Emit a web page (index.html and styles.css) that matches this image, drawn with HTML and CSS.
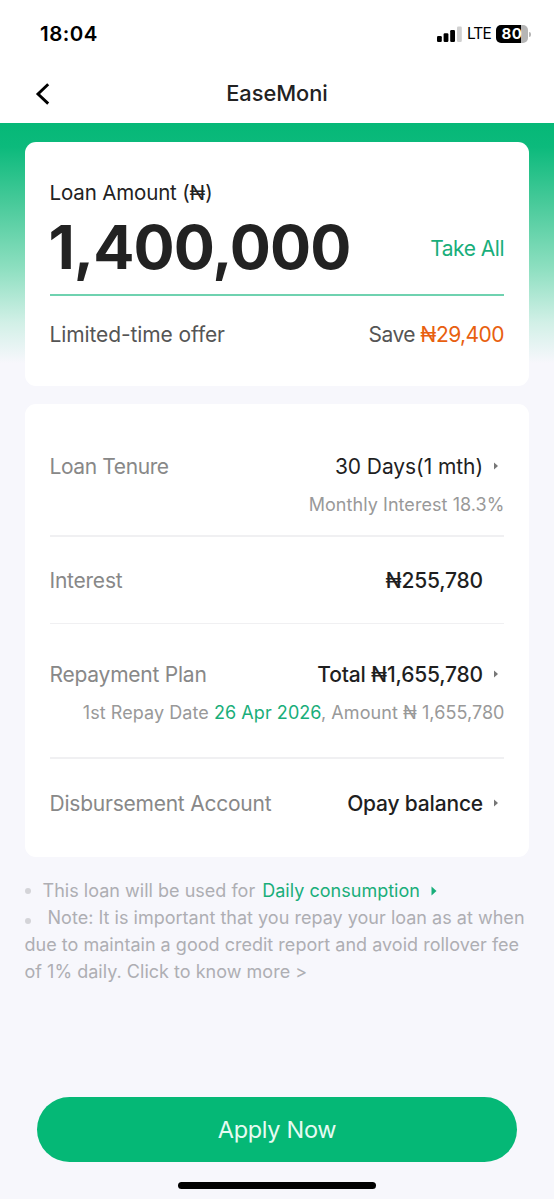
FILE: index.html
```html
<!DOCTYPE html>
<html lang="en">
<head>
<meta charset="utf-8">
<title>EaseMoni</title>
<link rel="stylesheet" href="styles.css">
</head>
<body>
<div class="screen">
  <header class="top">
    <div class="status">
      <span class="time">18:04</span>
      <div class="indicators">
        <svg class="signal" width="25" height="16" viewBox="0 0 25 16">
          <rect x="0" y="10" width="4.8" height="6" rx="1.2"/>
          <rect x="6.6" y="7.2" width="4.8" height="8.8" rx="1.2"/>
          <rect x="13.2" y="4" width="4.8" height="12" rx="1.2"/>
          <rect x="20" y="0.5" width="4.8" height="15.5" rx="1.2" fill="#d0d0d0"/>
        </svg>
        <span class="lte">LTE</span>
        <div class="battery"><span class="level">80</span><i class="cap"></i></div>
      </div>
    </div>
    <nav class="nav">
      <svg class="back" width="16" height="22" viewBox="0 0 16 22"><path d="M13.2 1.2 L3 11 L13.2 20.6" fill="none" stroke="#000" stroke-width="2.9"/></svg>
      <h1 class="title">EaseMoni</h1>
    </nav>
  </header>
  <main class="content">
    <section class="card amount-card">
      <div class="amount-label">Loan Amount (₦)</div>
      <div class="amount-row">
        <span class="amount">1,400,000</span>
        <span class="take">Take All</span>
      </div>
      <div class="offer">
        <span class="offer-name">Limited-time offer</span>
        <span class="save">Save <span class="orange">₦29,400</span></span>
      </div>
    </section>
    <section class="card details">
      <div class="row tall">
        <div class="line"><span class="label tenure">Loan Tenure</span><span class="value days">30 Days(1 mth)</span><svg class="arrow" width="4" height="8" viewBox="0 0 4 8"><path d="M0 0.5 L4 4 L0 7.5Z"/></svg></div>
        <div class="sub monthly">Monthly Interest 18.3%</div>
      </div>
      <div class="row interest">
        <div class="line"><span class="label">Interest</span><span class="value medium">₦255,780</span><span class="arrow"></span></div>
      </div>
      <div class="row plan">
        <div class="line"><span class="label">Repayment Plan</span><span class="value medium">Total ₦1,655,780</span><svg class="arrow" width="4" height="8" viewBox="0 0 4 8"><path d="M0 0.5 L4 4 L0 7.5Z"/></svg></div>
        <div class="sub">1st Repay Date <span class="green">26 Apr 2026</span>, Amount ₦ 1,655,780</div>
      </div>
      <div class="row account">
        <div class="line"><span class="label">Disbursement Account</span><span class="value medium">Opay balance</span><svg class="arrow" width="4" height="8" viewBox="0 0 4 8"><path d="M0 0.5 L4 4 L0 7.5Z"/></svg></div>
      </div>
    </section>
    <section class="notes">
      <div class="note use"><i class="dot"></i><span class="use-text">This loan will be used for</span><span class="green purpose">Daily consumption</span><svg class="use-arrow" width="6" height="10" viewBox="0 0 6 10"><path d="M0.5 0.5 L5.5 5 L0.5 9.5Z"/></svg></div>
      <p class="note"><i class="dot low"></i>Note: It is important that you repay your loan as at when<br>due to maintain a good credit report and avoid rollover fee<br>of 1% daily. Click to know more &gt;</p>
    </section>
  </main>
  <footer class="footer">
    <button class="apply">Apply Now</button>
    <div class="home"></div>
  </footer>
</div>
</body>
</html>
```
FILE: styles.css
```css
* { box-sizing: border-box; }
body { margin: 0; background: #f7f7fc; font-family: Inter, "Liberation Sans", sans-serif; color: #222; }
.screen { width: 554px; height: 1199px; display: flex; flex-direction: column; overflow: hidden; white-space: nowrap; }
.top { height: 123px; background: #fff; flex: none; }
.status { height: 67px; padding: 0 26px 0 40px; display: flex; align-items: center; justify-content: space-between; color: #000; }
.time { font-size: 20.5px; font-weight: 600; letter-spacing: 0.5px; }
.indicators { display: flex; align-items: center; }
.signal { margin-right: 1px; }
.lte { font-size: 15.5px; margin: 0 0 0 4px; width: 23px; letter-spacing: -0.9px; }
.battery { position: relative; width: 32px; height: 18px; margin-left: 6px; border-radius: 5px; background: linear-gradient(90deg, #000 25px, #b5b5b5 25px); }
.level { display: block; text-align: center; font-size: 15px; line-height: 18px; font-weight: 700; color: #fff; letter-spacing: 0.5px; }
.cap { position: absolute; right: -3px; top: 7px; width: 2px; height: 5px; border-radius: 0 2px 2px 0; background: #b5b5b5; }
.nav { height: 54px; display: grid; grid-template-columns: 60px 1fr 60px; align-items: center; }
.back { margin-left: 35px; }
.title { margin: 0 0 2px; font-size: 21.8px; font-weight: 550; text-align: center; }
.content { flex: 1; padding: 19px 25px 0; background: linear-gradient(#06b877 0, #0cba7c 24px, #48ca9a 80px, #8ddfc0 145px, #d2f0e7 200px, #f7f7fc 240px); }
.card { background: #fff; border-radius: 11px; padding: 0 25px 0 24.5px; }
.amount-card { height: 244px; padding-top: 37px; }
.amount-label { font-size: 20.5px; line-height: 28px; letter-spacing: -0.15px; }
.amount-row { height: 89px; display: flex; align-items: center; justify-content: space-between; border-bottom: 2px solid #6fd2b0; padding-bottom: 4px; }
.amount { font-size: 61px; font-weight: 700; letter-spacing: -0.95px; margin: 0 0 3px -1px; }
.take { color: #19ae7a; font-size: 21px; letter-spacing: -0.5px; }
.offer { height: 76px; display: flex; align-items: center; justify-content: space-between; font-size: 21px; color: #555; letter-spacing: -0.1px; }
.save { letter-spacing: -0.55px; }
.orange { color: #e8600f; }
.details { margin-top: 18px; height: 453px; }
.row { border-bottom: 2px solid #f0f0f2; }
.tall { height: 133px; padding-top: 48px; }
.interest { height: 87px; padding-top: 29px; border-bottom-width: 1px; }
.plan { height: 135px; padding-top: 36px; }
.account { border: 0; padding-top: 30px; }
.line { display: flex; align-items: center; height: 28px; font-size: 21px; }
.label { color: #888; margin-right: auto; letter-spacing: -0.23px; }
.tenure { letter-spacing: -0.4px; }
.value { color: #1f1f1f; letter-spacing: -0.18px; }
.days { letter-spacing: -0.07px; }
.medium { font-weight: 500; }
.arrow { width: 4px; margin: 0 6px 0 11px; fill: #777; }
.sub { margin: 13px -0.5px 0 0; line-height: 24px; text-align: right; color: #999; font-size: 18px; letter-spacing: 0.06px; }
.green { color: #19ae7a; }
.notes { margin-top: 20px; color: #aeaeb3; font-size: 18px; line-height: 27px; letter-spacing: 0.02px; }
.note { margin: 0 0 0 -0.5px; }
.use { display: flex; align-items: center; }
.dot { display: inline-block; width: 6px; height: 6px; border-radius: 50%; background: #d4d4d8; margin-right: 12px; }
.low { margin-right: 17px; }
.purpose { margin-left: 7px; }
.use-arrow { margin-left: 11px; fill: #19ae7a; }
.footer { height: 102px; flex: none; display: flex; flex-direction: column; align-items: center; background: #f7f7fc; }
.apply { width: 480px; height: 65px; padding: 0; border: 0; border-radius: 33px; background: #05b876; color: #e5fbf2; font: 400 23.5px Inter, sans-serif; letter-spacing: -0.3px; }
.home { width: 198px; height: 7px; margin-top: 20px; border-radius: 4px; background: #000; }
```
